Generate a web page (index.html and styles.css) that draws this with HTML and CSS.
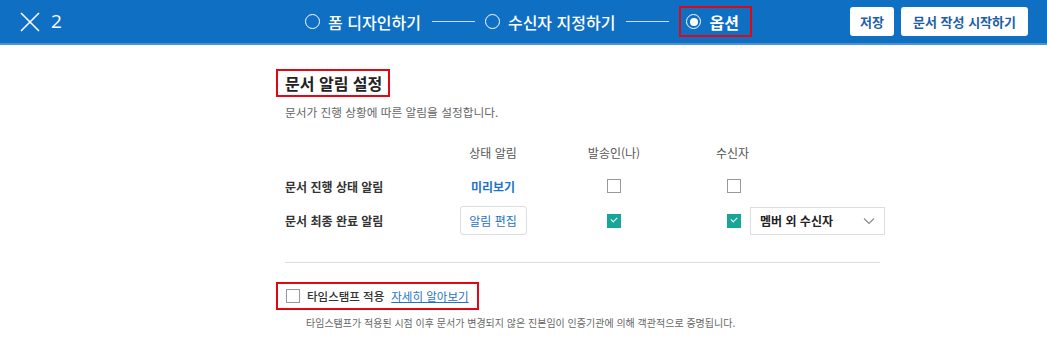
FILE: index.html
```html
<!DOCTYPE html>
<html lang="ko">
<head>
    <meta charset="UTF-8">
    <meta name="viewport" content="width=device-width, initial-scale=1.0">
    <title>옵션</title>
    <link rel="stylesheet" href="styles.css">
</head>
<body>
    <header class="topbar">
        <div class="topbar-left">
            <svg class="close-icon" width="20" height="20" viewBox="0 0 20 20">
                <path d="M1 1 L19 19 M19 1 L1 19" stroke="#fff" stroke-width="1.6" fill="none"/>
            </svg>
            <span class="page-count">2</span>
        </div>
        <div class="steps">
            <div class="step">
                <span class="radio"></span>
                <span>폼 디자인하기</span>
            </div>
            <span class="step-line"></span>
            <div class="step">
                <span class="radio"></span>
                <span>수신자 지정하기</span>
            </div>
            <span class="step-line"></span>
            <div class="step active mark">
                <span class="radio"></span>
                <span>옵션</span>
            </div>
        </div>
        <div class="topbar-right">
            <button class="btn-white btn-save">저장</button>
            <button class="btn-white">문서 작성 시작하기</button>
        </div>
    </header>

    <main class="content">
        <h2 class="section-title mark">문서 알림 설정</h2>
        <p class="section-desc">문서가 진행 상황에 따른 알림을 설정합니다.</p>

        <div class="notify-grid">
            <div></div>
            <div class="col-head center">상태 알림</div>
            <div class="col-head center">발송인(나)</div>
            <div class="col-head receiver-head">수신자</div>

            <div class="row-label">문서 진행 상태 알림</div>
            <div class="center"><a class="link-blue">미리보기</a></div>
            <div class="center"><span class="check"></span></div>
            <div class="receiver-cell"><span class="check"></span></div>

            <div class="row-label">문서 최종 완료 알림</div>
            <div class="center"><button class="btn-outline">알림 편집</button></div>
            <div class="center"><span class="check checked"></span></div>
            <div class="receiver-cell">
                <span class="check checked"></span>
                <div class="select">
                    <span>멤버 외 수신자</span>
                    <svg width="12" height="8" viewBox="0 0 12 8">
                        <path d="M1 1.5 L6 6.5 L11 1.5" stroke="#888" stroke-width="1.1" fill="none"/>
                    </svg>
                </div>
            </div>
        </div>

        <hr class="divider">

        <div class="timestamp mark">
            <span class="check"></span>
            <span class="timestamp-label">타임스탬프 적용</span>
            <a class="link-under">자세히 알아보기</a>
        </div>
        <p class="timestamp-desc">타임스탬프가 적용된 시점 이후 문서가 변경되지 않은 진본임이 인증기관에 의해 객관적으로 증명됩니다.</p>
    </main>
</body>
</html>
```

FILE: styles.css
```css
body {
    margin: 0;
    font-family: "Noto Sans CJK KR", "Noto Sans", sans-serif;
    background-color: #fff;
    color: #333;
}
.mark {
    border: 2px solid #e30613;
}

/* top bar */
.topbar {
    display: grid;
    grid-template-columns: 1fr auto 1fr;
    align-items: center;
    height: 43px;
    background: #0f6fc3;
    border-bottom: 2px solid #4d92d2;
    color: #fff;
}
.topbar-left {
    display: flex;
    align-items: center;
    padding-left: 20px;
    gap: 11px;
}
.page-count {
    font-family: "Open Sans", sans-serif;
    font-size: 19px;
    line-height: 1;
}
.steps {
    display: flex;
    align-items: center;
    padding-left: 10px;
    font-size: 16px;
    font-weight: 500;
}
.step {
    display: flex;
    align-items: center;
    gap: 8px;
    height: 27px;
}
.step.active {
    padding: 0 11px 0 5px;
    font-weight: 700;
}
.radio {
    width: 13px;
    height: 13px;
    border: 1.6px solid #fff;
    border-radius: 50%;
    display: flex;
    align-items: center;
    justify-content: center;
}
.step.active .radio::after {
    content: "";
    width: 8px;
    height: 8px;
    border-radius: 50%;
    background: #fff;
}
.step-line {
    width: 43px;
    height: 1px;
    background: #c9dcf0;
    margin: 0 10px 0 11px;
}
.topbar-right {
    display: flex;
    justify-content: flex-end;
    gap: 7px;
    padding-right: 19px;
}
.btn-white {
    height: 29px;
    padding: 0 12px;
    background: #fff;
    border: none;
    border-radius: 3px;
    color: #1d5fa8;
    font-family: inherit;
    font-size: 13px;
    font-weight: 700;
}
.btn-save {
    padding: 0 10px;
}

/* content */
.content {
    width: 595px;
    margin-left: 285px;
}
.section-title {
    display: inline-block;
    margin: 24px 0 0 -9px;
    padding: 0 6px 0 7px;
    font-size: 16px;
    font-weight: 700;
    line-height: 24px;
    color: #222;
}
.section-desc {
    margin: 6px 0 0;
    font-size: 11.7px;
    color: #666;
}
.notify-grid {
    display: grid;
    grid-template-columns: 148px 120px 122px 1fr;
    grid-template-rows: 34px 34px 35px;
    align-items: center;
    margin-top: 15px;
    font-size: 12px;
}
.center {
    display: flex;
    justify-content: center;
}
.col-head {
    color: #555;
}
.receiver-head {
    padding-left: 41px;
}
.row-label {
    font-weight: 700;
    color: #333;
}
.link-blue {
    color: #1f73c6;
    font-weight: 700;
}
.check {
    display: inline-block;
    box-sizing: border-box;
    width: 14px;
    height: 14px;
    border: 1px solid #999;
    background: #fff;
}
.check.checked {
    position: relative;
    border-color: #16a596;
    background: #16a596;
}
.check.checked::after {
    content: "";
    position: absolute;
    left: 3px;
    top: 2px;
    width: 5px;
    height: 3px;
    border-left: 1.2px solid #fff;
    border-bottom: 1.2px solid #fff;
    transform: rotate(-45deg);
}
.receiver-cell {
    display: flex;
    align-items: center;
    padding-left: 52px;
    gap: 9px;
}
.btn-outline {
    width: 67px;
    height: 29px;
    background: #fff;
    border: 1px solid #ddd;
    border-radius: 3px;
    color: #1f73c6;
    font-family: inherit;
    font-size: 12px;
}
.select {
    box-sizing: border-box;
    width: 135px;
    height: 28px;
    display: flex;
    align-items: center;
    justify-content: space-between;
    padding: 0 9px 0 9px;
    border: 1px solid #ddd;
    font-weight: 700;
    color: #222;
}
.divider {
    margin: 24px 0 0;
    border: none;
    border-top: 1px solid #ddd;
}
.timestamp {
    display: inline-flex;
    align-items: center;
    height: 24px;
    margin: 19px 0 0 -9px;
    padding: 0 8px;
    font-size: 11.5px;
}
.timestamp .check {
    margin-right: 7px;
}
.timestamp-label {
    font-weight: 500;
    color: #333;
    margin-right: 7px;
}
.link-under {
    color: #1f73c6;
    text-decoration: underline;
}
.timestamp-desc {
    margin: 5px 0 0 21px;
    font-size: 10px;
    color: #666;
}
```
